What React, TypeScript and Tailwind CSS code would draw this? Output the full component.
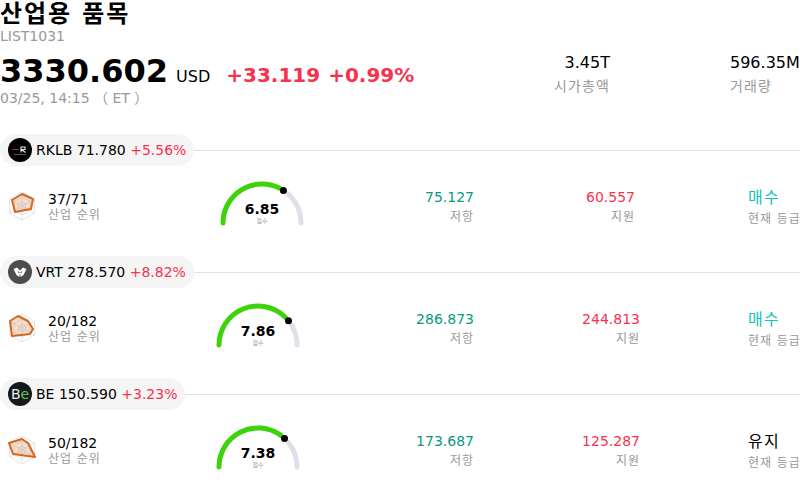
const FONT = 'font-["DejaVu_Sans","Noto_Sans_CJK_KR",sans-serif]'

type Stock = {
  logo: 'rklb' | 'vrt' | 'be'
  name: string
  price: string
  change: string
  radar: string
  rank: string
  score: number
  resistance: string
  support: string
  rating: string
  ratingClass: string
  gaugeClass: string
  valuesClass: string
  supportClass: string
}

const stocks: Stock[] = [
  {
    logo: 'rklb',
    name: 'RKLB',
    price: '71.780',
    change: '+5.56%',
    radar: '14,2 25,7 23,17 7,20 4,8',
    rank: '37/71',
    score: 6.85,
    resistance: '75.127',
    support: '60.557',
    rating: '매수',
    ratingClass: 'text-[#14c2b8]',
    gaugeClass: 'ml-[120px]',
    valuesClass: 'w-[171px]',
    supportClass: 'w-[161px]',
  },
  {
    logo: 'vrt',
    name: 'VRT',
    price: '278.570',
    change: '+8.82%',
    radar: '10,2 20,7 25,15 22,20 4,22 2,7',
    rank: '20/182',
    score: 7.86,
    resistance: '286.873',
    support: '244.813',
    rating: '매수',
    ratingClass: 'text-[#14c2b8]',
    gaugeClass: 'ml-[116px]',
    valuesClass: 'w-[175px]',
    supportClass: 'w-[166px]',
  },
  {
    logo: 'be',
    name: 'BE',
    price: '150.590',
    change: '+3.23%',
    radar: '1,7 14,3 20,7 27,21 5,18',
    rank: '50/182',
    score: 7.38,
    resistance: '173.687',
    support: '125.287',
    rating: '유지',
    ratingClass: 'text-black',
    gaugeClass: 'ml-[116px]',
    valuesClass: 'w-[175px]',
    supportClass: 'w-[166px]',
  },
]

function Logo({ kind }: { kind: Stock['logo'] }) {
  if (kind === 'be') {
    return (
      <div className="flex h-6 w-6 items-center justify-center rounded-full bg-[#14191c] text-[14px] leading-none text-[#e8e8e8]">
        B<span className="text-[#5fc25b]">e</span>
      </div>
    )
  }
  if (kind === 'vrt') {
    return (
      <svg width="24" height="24" viewBox="0 0 24 24">
        <circle cx="12" cy="12" r="12" fill="#4d4d4d" />
        <path d="M5.5 9 L9 7.5 L12 10.5 L15 7.5 L18.5 9 L15.5 15 L12.8 17 L12 13.5 L11.2 17 L8.5 15 Z" fill="#fff" />
        <path d="M9.5 10.5 L12 13 L14.5 10.5 L13.5 13 L10.5 13 Z" fill="#4d4d4d" />
      </svg>
    )
  }
  return (
    <svg width="24" height="24" viewBox="0 0 24 24">
      <circle cx="12" cy="12" r="12" fill="#000" />
      <path d="M4 11.5 H11" stroke="#e0263c" strokeWidth="0.8" />
      <path d="M13 14.5 V9 H17 V11.5 H13.5 L17.5 14.5" fill="none" stroke="#e8e8e8" strokeWidth="1.1" />
      <path d="M6 16.5 H18" stroke="#777" strokeWidth="0.7" />
    </svg>
  )
}

function Radar({ points }: { points: string }) {
  return (
    <svg width="28" height="30" viewBox="0 0 28 28" className="shrink-0">
      <g fill="none" stroke="#dcdcea" strokeWidth="0.8">
        <polygon points="14,0 26.5,7 26.5,21 14,28 1.5,21 1.5,7" />
        <polygon points="14,5 22,9.5 22,18.5 14,23 6,18.5 6,9.5" />
        <polygon points="14,10 17.5,12 17.5,16 14,18 10.5,16 10.5,12" />
        <path d="M14 0 V28 M1.5 7 L26.5 21 M26.5 7 L1.5 21" />
      </g>
      <polygon points={points} fill="#d2691e" fillOpacity="0.22" stroke="#d2691e" strokeWidth="2" strokeLinejoin="round" />
    </svg>
  )
}

function Gauge({ score }: { score: number }) {
  const r = 39
  const cx = 41
  const cy = 41
  const at = (deg: number) => {
    const a = (deg * Math.PI) / 180
    return `${(cx - r * Math.cos(a)).toFixed(2)} ${(cy - r * Math.sin(a)).toFixed(2)}`
  }
  const angle = (score / 10) * 180
  return (
    <div className="relative h-[43px] w-[82px] shrink-0">
      <svg width="82" height="43" viewBox="0 0 82 43" className="block overflow-visible">
        <path d={`M${at(angle + 8)} A${r} ${r} 0 0 1 ${at(180)}`} fill="none" stroke="#e0e0ea" strokeWidth="5" strokeLinecap="round" />
        <path d={`M${at(0)} A${r} ${r} 0 0 1 ${at(angle - 7)}`} fill="none" stroke="#3dd30b" strokeWidth="5" strokeLinecap="round" />
        <circle cx={cx + -r * Math.cos((angle * Math.PI) / 180)} cy={cy - r * Math.sin((angle * Math.PI) / 180)} r="3.5" fill="#000" />
      </svg>
      <div className="absolute inset-x-0 top-[19px] flex flex-col items-center">
        <span className="text-[14px] leading-[16px] font-bold text-black">{score.toFixed(2)}</span>
        <span className="text-[6px] leading-[8px] text-[#999]">점수</span>
      </div>
    </div>
  )
}

function StockBlock({ stock }: { stock: Stock }) {
  return (
    <section className="h-[122px]">
      <div className="flex items-center">
        <div className="flex h-8 items-center gap-1 rounded-full bg-[#f5f5f5] pr-2 pl-2 text-sm text-black">
          <Logo kind={stock.logo} />
          <span>
            {stock.name} {stock.price} <span className="text-[#f7324d]">{stock.change}</span>
          </span>
        </div>
        <div className="h-px flex-1 bg-[#e0e0ea]" />
      </div>
      <div className="mt-[16px] flex items-end pl-2">
        <div className="flex w-[93px] shrink-0 translate-y-[2px] items-center gap-3 self-center">
          <Radar points={stock.radar} />
          <div className="flex translate-y-px flex-col">
            <span className="text-sm leading-[16px] text-black">{stock.rank}</span>
            <span className="text-xs leading-[16px] tracking-[0.08em] whitespace-nowrap text-[#999]">산업 순위</span>
          </div>
        </div>
        <div className={stock.gaugeClass}>
          <Gauge score={stock.score} />
        </div>
        <div className={stock.valuesClass + ' flex shrink-0 translate-y-px flex-col items-end'}>
          <span className="text-sm leading-[18px] text-[#089981]">{stock.resistance}</span>
          <span className="mt-[2px] text-xs leading-[18px] tracking-[0.08em] text-[#999]">저항</span>
        </div>
        <div className={stock.supportClass + ' flex shrink-0 translate-y-px flex-col items-end'}>
          <span className="text-sm leading-[18px] text-[#f7324d]">{stock.support}</span>
          <span className="mt-[2px] text-xs leading-[18px] tracking-[0.08em] text-[#999]">지원</span>
        </div>
        <div className="ml-auto flex w-[52px] translate-y-[3px] flex-col items-start">
          <span className={stock.ratingClass + ' text-base leading-[20px] tracking-[0.08em]'}>{stock.rating}</span>
          <span className="mt-[2px] text-xs leading-[18px] tracking-[0.08em] whitespace-nowrap text-[#999]">현재 등급</span>
        </div>
      </div>
    </section>
  )
}

export default function App() {
  return (
    <div className={FONT + ' h-[488px] w-[800px] overflow-hidden bg-white'}>
      <header className="h-[134px]">
        <h1 className="pt-px text-2xl leading-[27px] font-bold tracking-[0.08em] text-black">산업용 품목</h1>
        <div className="text-sm leading-[16px] text-[#999]">LIST1031</div>
        <div className="mt-[5px] flex items-start">
          <div className="w-[555px] shrink-0">
            <div className="flex items-baseline">
              <span className="text-[32px] leading-[44px] font-bold text-black">3330.602</span>
              <span className="ml-2 text-base text-black">USD</span>
              <span className="ml-4 text-xl font-bold text-[#f7324d]">+33.119</span>
              <span className="ml-2 text-xl font-bold text-[#f7324d]">+0.99%</span>
            </div>
            <div className="-mt-[3px] text-sm leading-[16px] text-[#999]">03/25, 14:15 （ ET ）</div>
          </div>
          <div className="mt-[4px] flex w-[55px] shrink-0 flex-col items-end whitespace-nowrap">
            <span className="text-base leading-[20px] text-black">3.45T</span>
            <span className="mt-[3px] text-sm leading-[20px] tracking-[0.08em] text-[#999]">시가총액</span>
          </div>
          <div className="mt-[4px] ml-auto flex w-[70px] flex-col items-start whitespace-nowrap">
            <span className="text-base leading-[20px] text-black">596.35M</span>
            <span className="mt-[3px] text-sm leading-[20px] tracking-[0.08em] text-[#999]">거래량</span>
          </div>
        </div>
      </header>
      {stocks.map((s) => (
        <StockBlock key={s.name} stock={s} />
      ))}
    </div>
  )
}
